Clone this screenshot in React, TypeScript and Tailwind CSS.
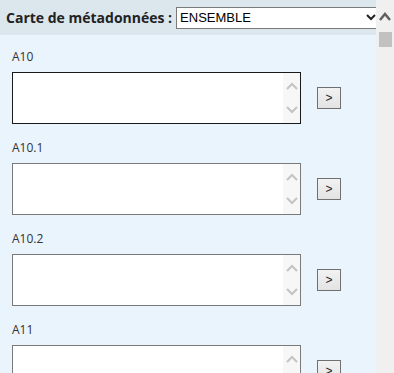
import React from "react";

const sections = [
  { label: "A10", focused: true },
  { label: "A10.1", focused: false },
  { label: "A10.2", focused: false },
  { label: "A11", focused: false },
];

function Chevron({ up, className }: { up: boolean; className?: string }) {
  return (
    <svg width="12" height="8" viewBox="0 0 12 8" className={className}>
      <path
        d={up ? "M1 7 L6 2 L11 7" : "M1 1 L6 6 L11 1"}
        fill="none"
        stroke="currentColor"
        strokeWidth="2"
      />
    </svg>
  );
}

function Field({ label, focused }: { label: string; focused: boolean }) {
  return (
    <div className="flex flex-col">
      <div className="h-4 leading-4 text-[12px] text-[#333333]" style={{ fontFamily: '"Open Sans", sans-serif' }}>
        {label}
      </div>
      <div className="mt-[7px] flex items-center">
        <div
          className={
            "flex h-[52px] w-[289px] border bg-white " +
            (focused ? "border-[#1a1a1a]" : "border-[#7a7a7a]")
          }
        >
          <textarea className="flex-1 resize-none bg-white outline-none" />
          <div className="flex w-[17px] flex-col items-center justify-between bg-[#f7f7f7] py-[9px] text-[#c4c4c4]">
            <Chevron up={true} />
            <Chevron up={false} />
          </div>
        </div>
        <button
          className="ml-4 flex h-[22px] w-[24px] items-center justify-center border border-[#707070] bg-gradient-to-b from-[#f2f2f2] to-[#e3e3e3] text-[12px] text-[#222]"
          style={{ fontFamily: '"Liberation Sans", Arial, sans-serif' }}
        >
          &gt;
        </button>
      </div>
    </div>
  );
}

export default function App() {
  return (
    <div className="flex h-[373px] w-[394px] overflow-hidden bg-[#eaf4fd]">
      <div className="flex w-[376px] flex-col">
        <div className="flex h-[35px] shrink-0 items-center overflow-hidden bg-[#dbe6ed] pl-[6px]">
          <span
            className="whitespace-nowrap text-[14px] font-bold text-[#222]"
            style={{ fontFamily: '"Open Sans", sans-serif' }}
          >
            Carte de métadonnées :
          </span>
          <div
            className="ml-[4px] flex h-[22px] w-[205px] shrink-0 items-center justify-between border border-[#7a7a7a] bg-white pl-[3px] pr-[4px] text-[13px] text-black"
            style={{ fontFamily: '"Liberation Sans", Arial, sans-serif' }}
          >
            <span>ENSEMBLE</span>
            <svg width="10" height="7" viewBox="0 0 10 7">
              <path d="M1 1 L5 5 L9 1" fill="none" stroke="#222" strokeWidth="2" />
            </svg>
          </div>
        </div>
        <div className="flex flex-col gap-[16px] px-3 pt-[14px]">
          {sections.map((s) => (
            <Field key={s.label} label={s.label} focused={s.focused} />
          ))}
        </div>
      </div>
      <div className="flex w-[18px] flex-col items-center bg-[#f0f0f0] pt-[12px]">
        <svg width="12" height="9" viewBox="0 0 12 9">
          <path d="M1 8 L6 2 L11 8" fill="none" stroke="#606060" strokeWidth="2.5" />
        </svg>
        <div className="mt-[11px] h-[15px] w-[13px] bg-[#c1c1c1]" />
      </div>
    </div>
  );
}
